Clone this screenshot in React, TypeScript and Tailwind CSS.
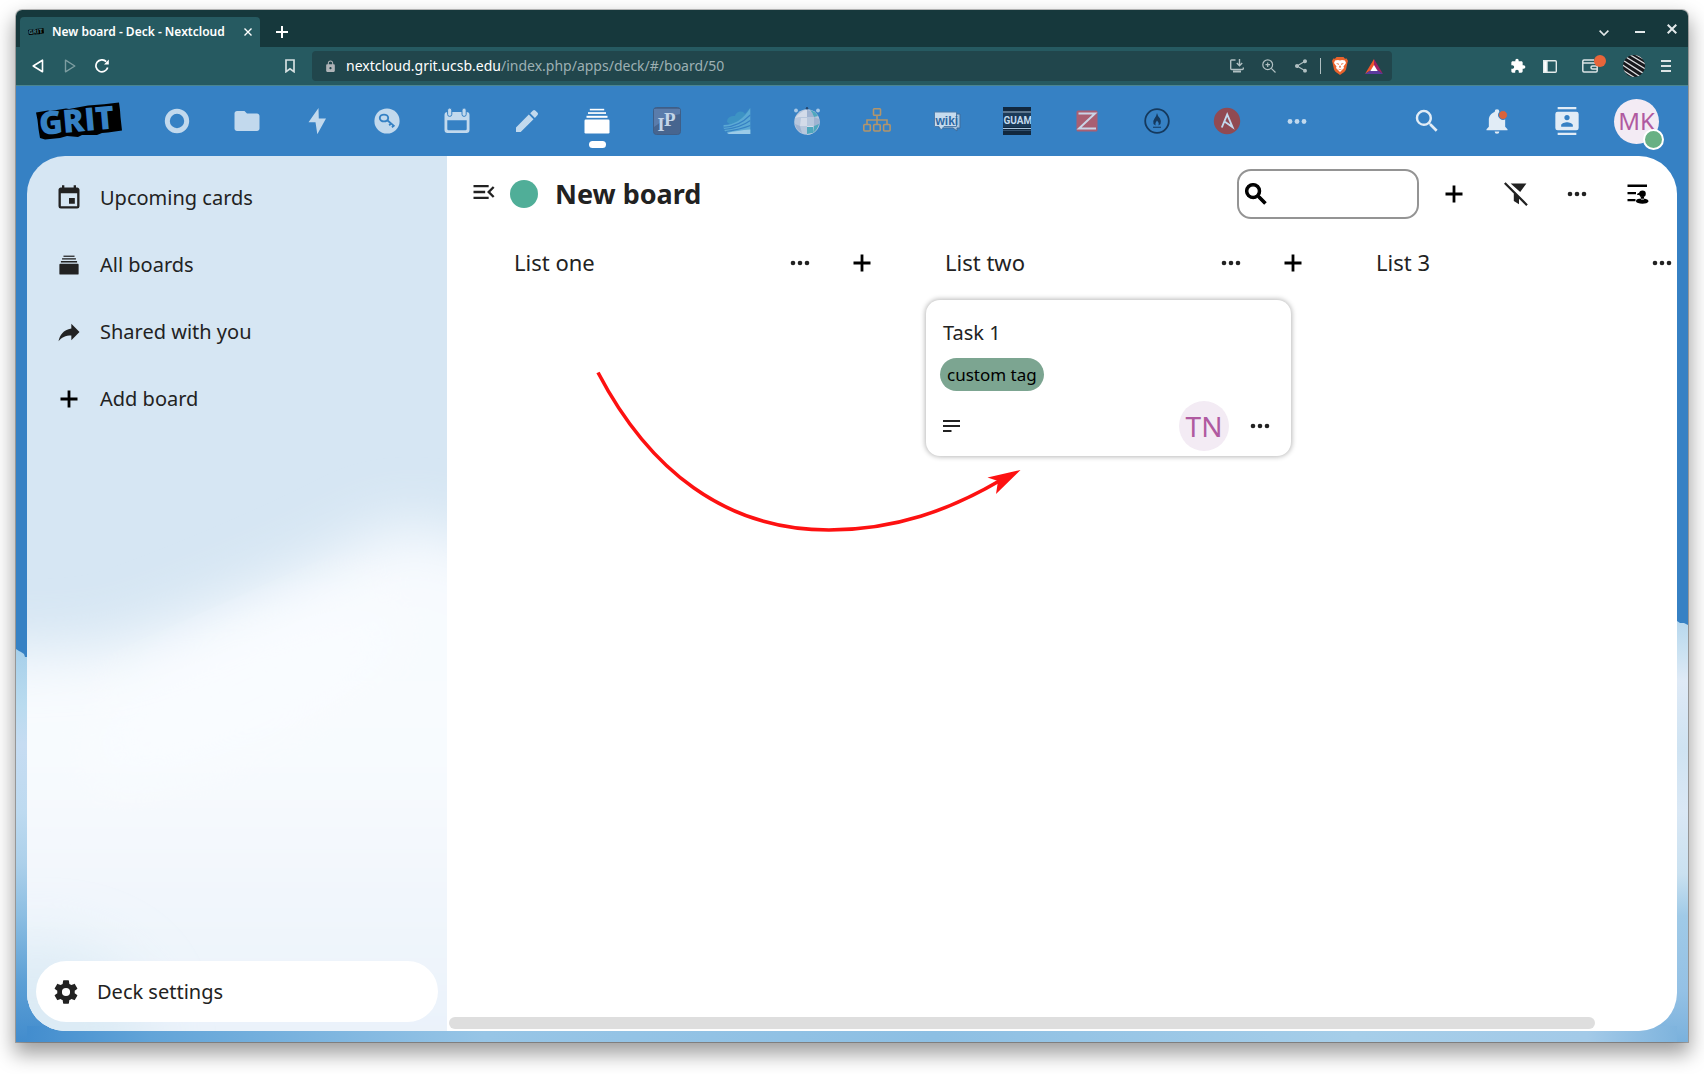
import React, { useState } from 'react';
import clsx from 'clsx';
import { MdExtension, MdFolder, MdLock, MdShare } from 'react-icons/md';

// Material style glyphs on a 24px grid
const paths = {
  magnify:
    'M9.5,3A6.5,6.5 0 0,1 16,9.5C16,11.11 15.41,12.59 14.44,13.73L14.71,14H15.5L20.5,19L19,20.5L14,15.5V14.71L13.73,14.44C12.59,15.41 11.11,16 9.5,16A6.5,6.5 0 0,1 3,9.5A6.5,6.5 0 0,1 9.5,3M9.5,5C7,5 5,7 5,9.5C5,12 7,14 9.5,14C12,14 14,12 14,9.5C14,7 12,5 9.5,5Z',
  menuOpen:
    'M21,15.61L19.59,17L14.58,12L19.59,7L21,8.39L17.44,12L21,15.61M3,6H16V8H3V6M3,13V11H13V13H3M3,18V16H16V18H3Z',
  calendar:
    'M19,19H5V8H19M16,1V3H8V1H6V3H5C3.89,3 3,3.89 3,5V19A2,2 0 0,0 5,21H19A2,2 0 0,0 21,19V5C21,3.89 20.1,3 19,3H18V1M17,12H12V17H17V12Z',
  share: 'M21,12L14,5V9C7,10 4,15 3,20C5.5,16.5 9,14.9 14,14.9V19L21,12Z',
  cog: 'M12,15.5A3.5,3.5 0 0,1 8.5,12A3.5,3.5 0 0,1 12,8.5A3.5,3.5 0 0,1 15.5,12A3.5,3.5 0 0,1 12,15.5M19.43,12.97C19.47,12.65 19.5,12.33 19.5,12C19.5,11.67 19.47,11.34 19.43,11L21.54,9.37C21.73,9.22 21.78,8.95 21.66,8.73L19.66,5.27C19.54,5.05 19.27,4.96 19.05,5.05L16.56,6.05C16.04,5.66 15.5,5.32 14.87,5.07L14.5,2.42C14.46,2.18 14.25,2 14,2H10C9.75,2 9.54,2.18 9.5,2.42L9.13,5.07C8.5,5.32 7.96,5.66 7.44,6.05L4.95,5.05C4.73,4.96 4.46,5.05 4.34,5.27L2.34,8.73C2.21,8.95 2.27,9.22 2.46,9.37L4.57,11C4.53,11.34 4.5,11.67 4.5,12C4.5,12.33 4.53,12.65 4.57,12.97L2.46,14.63C2.27,14.78 2.21,15.05 2.34,15.27L4.34,18.73C4.46,18.95 4.73,19.03 4.95,18.95L7.44,17.94C7.96,18.34 8.5,18.68 9.13,18.93L9.5,21.58C9.54,21.82 9.75,22 10,22H14C14.25,22 14.46,21.82 14.5,21.58L14.87,18.93C15.5,18.67 16.04,18.34 16.56,17.94L19.05,18.95C19.27,19.03 19.54,18.95 19.66,18.73L21.66,15.27C21.78,15.05 21.73,14.78 21.54,14.63L19.43,12.97Z',
  contacts:
    'M20,0H4V2H20V0M4,24H20V22H4V24M20,4H4A2,2 0 0,0 2,6V18A2,2 0 0,0 4,20H20A2,2 0 0,0 22,18V6A2,2 0 0,0 20,4M12,6.75A2.25,2.25 0 0,1 14.25,9A2.25,2.25 0 0,1 12,11.25A2.25,2.25 0 0,1 9.75,9A2.25,2.25 0 0,1 12,6.75M17,17H7V15.5C7,13.83 10.33,13 12,13C13.67,13 17,13.83 17,15.5V17Z',
  bell: 'M21,19V20H3V19L5,17V11C5,7.9 7.03,5.17 10,4.29C10,4.19 10,4.1 10,4A2,2 0 0,1 12,2A2,2 0 0,1 14,4C14,4.1 14,4.19 14,4.29C16.97,5.17 19,7.9 19,11V17L21,19M14,21A2,2 0 0,1 12,23A2,2 0 0,1 10,21',
  plus: 'M10.6 3.5h2.8V10.6h7.1v2.8H13.4v7.1h-2.8V13.4H3.5v-2.8H10.6z',
  filterOff:
    'M1.6 0.2L23.8 22.400L22.200 24L0 1.800zM6.600 1.400H22.400L16.200 10z M9.800 11.400L15 16.600V22.200L9.800 19z',
};

type IconName = keyof typeof paths;

function Icon({ name, className }: { name: IconName; className?: string }) {
  return (
    <svg viewBox="0 0 24 24" className={className} fill="currentColor" aria-hidden>
      <path d={paths[name]} />
    </svg>
  );
}

function Dots({ className }: { className?: string }) {
  return (
    <svg viewBox="0 0 20 6" className={clsx('w-5 h-[6px]', className)} fill="currentColor" aria-hidden>
      <circle cx="3" cy="3" r="2.3" />
      <circle cx="10" cy="3" r="2.3" />
      <circle cx="17" cy="3" r="2.3" />
    </svg>
  );
}

function DeckIcon({ className }: { className?: string }) {
  return (
    <svg viewBox="0 0 26 26" className={className} fill="currentColor" aria-hidden>
      <rect x="0.5" y="11.5" width="25" height="14" rx="1.2" />
      <rect x="2.5" y="7.8" width="21" height="2" />
      <rect x="4" y="4.2" width="18" height="1.7" />
      <rect x="5.8" y="0.8" width="14.4" height="1.6" />
    </svg>
  );
}

const LOGO_SHAPE =
  'M0 10.5L12 8.5L14 9L30 6.5L33 7L52 3.5L68 2.2L83 0.5L84 8L84.5 15L86 28.5L72 30.5L66 31L61 33L46 33L42 35L31 34L24 36L9 37.5L4 36L2.5 27L1.5 18z';

function GritLogo({ textClass, className }: { textClass: string; className?: string }) {
  return (
    <svg viewBox="0 0 86 38" overflow="visible" className={className} role="img" aria-label="GRIT">
      <path d={LOGO_SHAPE} fill="#000" />
      <text
        x="4"
        y="33"
        transform="rotate(-5 4 33)"
        fontFamily="Open Sans, sans-serif"
        fontWeight="800"
        fontSize="32"
        className={textClass}
      >
        GRIT
      </text>
    </svg>
  );
}

const navItems: { label: string; icon: React.ReactNode }[] = [
  {
    label: 'Dashboard',
    icon: <circle cx="14" cy="14" r="9.7" fill="none" stroke="#c2d9ed" strokeWidth="5" />,
  },
  { label: 'Files', icon: <MdFolder size={30} x={-1} y={-1} color="#c2d9ed" /> },
  { label: 'Activity', icon: <path d="M15.5 1L5.5 15.3H12.5L14.3 27.3L23 11.5H15.8z" fill="#c2d9ed" /> },
  {
    label: 'Passwords',
    icon: (
      <>
        <circle cx="14" cy="14" r="12.6" fill="#c2d9ed" />
        <g fill="none" stroke="#3681c4" strokeWidth="1.9">
          <ellipse cx="11" cy="11" rx="4.2" ry="3.4" />
          <path d="M14 13L21.5 19.4M16.2 18.4L18.3 16.2M19 20.4L21 18.2" />
        </g>
      </>
    ),
  },
  {
    label: 'Calendar',
    icon: (
      <>
        <path
          fillRule="evenodd"
          fill="#c2d9ed"
          d="M4.5 5h19a3 3 0 0 1 3 3v15a3 3 0 0 1-3 3h-19a3 3 0 0 1-3-3V8a3 3 0 0 1 3-3zM4.3 13.2v8.8a1.3 1.3 0 0 0 1.3 1.3h16.8a1.3 1.3 0 0 0 1.3-1.3v-8.8z"
        />
        <g fill="#c2d9ed" stroke="#3681c4" strokeWidth="1">
          <rect x="4.6" y="1" width="4.2" height="8.4" rx="2.1" />
          <rect x="19" y="1" width="4.2" height="8.4" rx="2.1" />
        </g>
      </>
    ),
  },
  {
    label: 'Notes',
    icon: <path fill="#c2d9ed" d="M3 25v-4.6L15.8 7.6L20.5 12.3L7.7 25zM17.2 6.2L20 3.4a1.6 1.6 0 0 1 2.2 0l2.4 2.4a1.6 1.6 0 0 1 0 2.2L21.900 10.900z" />,
  },
  {
    label: 'Deck',
    icon: <DeckIcon />,
  },
  {
    label: 'IP tools',
    icon: (
      <>
        <rect x="0.5" y="0.5" width="27" height="27" rx="3" fill="#47658f" stroke="#3f5e87" />
        <path d="M1 2h26v5q-12 2-26 13z" fill="#5a7cab" />
        <g fill="#c3d5e8" fontFamily="Liberation Serif, serif" fontWeight="700">
          <text x="4.5" y="23.500" fontSize="18">I</text>
          <text x="11" y="19" fontSize="19">P</text>
        </g>
      </>
    ),
  },
  {
    label: 'Ocean',
    icon: (
      <>
        <path d="M4 15C4 9 10 9 12 9C13 4 20 3 22 7L27 1V14L8 18z" fill="#3d93c4" />
        <path d="M0.5 18Q17 18 27.300 1V27H6L1 23z" fill="#5ba9d4" />
        <g fill="none" stroke="#3681c4" strokeWidth="1.100">
          <path d="M1 20.300Q16 19.500 27.300 8" />
          <path d="M1 22.500Q17 21 27.300 13.500" />
          <path d="M3 24.500Q17 22.500 27.300 18.500" />
        </g>
        <path d="M4 26Q14 23.500 27.300 22.500V27H6z" fill="#9ccbe8" />
      </>
    ),
  },
  {
    label: 'Globe',
    icon: (
      <>
        <circle cx="14" cy="15" r="12.800" fill="#b7c7dd" />
        <path d="M2 11Q8 4 14 2.500V10H6zM8 11H14V19H7zM14 19H20V26Q17 28 14 27.500z" fill="#d3dbe9" />
        <path d="M14 3Q20 4 21 10H14zM2 17L7 19L9 26Q3 23 2 17zM21 10L26 12L26 18L21 19z" fill="#9fb3d1" />
        <path d="M17 3Q22 4 25 9L21 10Q20 6 17 3zM21 19L26 17Q25 22 20 26zM14 20H20V26L14 27z" fill="#4fa7bd" />
        <circle cx="3" cy="3.500" r="1.900" fill="#a8c8e6" />
        <circle cx="25" cy="3.500" r="1.900" fill="#a8c8e6" />
        <circle cx="14" cy="1.300" r="1.200" fill="#26456b" />
      </>
    ),
  },
  {
    label: 'Sitemap',
    icon: (
      <g fill="none" stroke="#b3956b" strokeWidth="1.600">
        <rect x="10.500" y="1.800" width="7" height="6.500" rx="0.800" />
        <path d="M14 8.500V17M4 17V13H24V17" />
        <rect x="0.800" y="17.500" width="6.500" height="6.500" rx="1" />
        <rect x="10.700" y="17.500" width="6.500" height="6.500" rx="1" />
        <rect x="20.600" y="17.500" width="6.500" height="6.500" rx="1" />
      </g>
    ),
  },
  {
    label: 'Wiki',
    icon: (
      <>
        <path d="M6 7H27V21H24V24L20 21H6z" fill="#a9c4de" stroke="#3e6d9b" />
        <path d="M1.500 5H23.500V19.500H11L8 23L6 19.500H1.500z" fill="#c6dbee" stroke="#4d7cab" />
        <text x="2.500" y="17.500" fontSize="12" fontWeight="700" fill="#2b66a3" fontFamily="Liberation Sans, sans-serif">
          wiki
        </text>
      </>
    ),
  },
  {
    label: 'Guam',
    icon: (
      <>
        <rect width="28" height="28" fill="#11283f" />
        <path d="M0 5H28M0 21.500H28" stroke="#a9c4de" strokeWidth="1" />
        <path d="M0 23.500H28" stroke="#31506e" strokeWidth="1" />
        <rect y="6" width="28" height="14" fill="#1b3a58" />
        <text x="0.500" y="17" fontSize="10" fontWeight="700" fill="#c2d9ed" fontFamily="Roboto, sans-serif">
          GUAM
        </text>
      </>
    ),
  },
  {
    label: 'Zotero',
    icon: (
      <>
        <rect x="3.500" y="3.500" width="21" height="21" rx="1.500" fill="#a95f72" />
        <path d="M5.500 6.500H22L6 21.500H23" fill="none" stroke="#c9d4e6" strokeWidth="2" />
      </>
    ),
  },
  {
    label: 'Hotspot',
    icon: (
      <>
        <circle cx="14" cy="14" r="11.800" fill="none" stroke="#15395d" strokeWidth="1.800" />
        <path
          d="M14 6Q14.500 9 17 11.500Q18.500 14 17.500 17L15.500 18.500Q16 15 14 13.500Q12 15.500 12.500 18.500L10.500 17Q9.500 14 11.500 11.500Q13.500 9 14 6zM10 19.800H18V20.800H10z"
          fill="#15395d"
        />
      </>
    ),
  },
  {
    label: 'Ansible',
    icon: (
      <>
        <circle cx="14" cy="14" r="13.200" fill="#914a52" />
        <path d="M8.800 20.500L14.200 7.500L19.500 20L11.500 14.500" fill="none" stroke="#c2d9ed" strokeWidth="1.900" />
      </>
    ),
  },
  {
    label: 'More apps',
    icon: (
      <g fill="#c2d9ed">
        <circle cx="7" cy="14.500" r="2.400" />
        <circle cx="14" cy="14.500" r="2.400" />
        <circle cx="21" cy="14.500" r="2.400" />
      </g>
    ),
  },
];

const lists = [
  { id: 1, title: 'List one', cards: [] },
  { id: 2, title: 'List two', cards: [{ id: 1, title: 'Task 1', label: 'custom tag', user: 'TN' }] },
  { id: 3, title: 'List 3', cards: [] },
];

function BrowserTabs() {
  return (
    <div className="flex h-[37px] shrink-0 items-end bg-[#16383c] pl-1 text-white">
      <div className="flex h-[30px] w-60 items-center rounded-t bg-[#265a61] pl-2 pr-[5px]">
        <GritLogo className="w-4 shrink-0" textClass="fill-[#3b6f77]" />
        <span className="ml-2 flex-1 truncate text-xs font-semibold">New board - Deck - Nextcloud</span>
        <button aria-label="Close tab" className="flex size-[14px] items-center justify-center">
          <svg viewBox="0 0 8 8" className="size-2" stroke="currentColor" strokeWidth="1.4">
            <path d="M0.500 0.500L7.500 7.500M7.500 0.500L0.500 7.500" />
          </svg>
        </button>
      </div>
      <button aria-label="New tab" className="flex h-[30px] w-11 items-center justify-center">
        <svg viewBox="0 0 12 12" className="size-3" stroke="currentColor" strokeWidth="2">
          <path d="M6 0V12M0 6H12" />
        </svg>
      </button>
      <div className="ml-auto flex h-full items-center pr-[5px] text-[#e3e9ea]">
        <button aria-label="Search tabs" className="flex w-9 justify-center pt-2">
          <svg viewBox="0 0 10 6" className="h-[6px] w-[10px]" fill="none" stroke="currentColor" strokeWidth="1.6">
            <path d="M0.600 0.600L5 5L9.400 0.600" />
          </svg>
        </button>
        <button aria-label="Minimize" className="flex w-9 justify-center pt-[6px]">
          <span className="h-[2px] w-[10px] bg-current" />
        </button>
        <button aria-label="Close window" className="flex w-[25px] justify-end pr-[6px]">
          <svg viewBox="0 0 10 10" className="size-[10px]" stroke="currentColor" strokeWidth="2">
            <path d="M0.700 0.700L9.300 9.300M9.300 0.700L0.700 9.300" />
          </svg>
        </button>
      </div>
    </div>
  );
}

function BraveIcon() {
  return (
    <svg viewBox="0 0 16 18" className="h-[18px] w-4" aria-hidden>
      <path d="M4.500 0H11.500L13 1.700L14.700 1.500L16 4L15.400 6L14 12.500Q13.500 14.500 8 18Q2.500 14.500 2 12.500L0.600 6L0 4L1.300 1.500L3 1.700z" fill="#e8622c" />
      <path d="M3 3.500L6 3L8 3.600L10 3L13 3.500L14 6L11.500 9.500L12 11L8 15L4 11L4.500 9.500L2 6z" fill="#fff" />
      <path d="M4 6L7 6.800L6.500 8zM12 6L9 6.800L9.500 8zM8 8L9 10L8 11L7 10zM5.500 11.500L8 12.500L10.500 11.500L8 13.300z" fill="#e8622c" />
    </svg>
  );
}

function BrowserToolbar() {
  return (
    <div className="flex h-[39px] shrink-0 items-center border-b border-[#4a8590] bg-[#265a61] text-white">
      <div className="flex w-[296px] items-center pl-[6px] pr-[6px]">
        <button aria-label="Back" className="flex size-8 items-center justify-center">
          <svg viewBox="0 0 12 14" className="h-[14px] w-3" fill="none" stroke="currentColor" strokeWidth="1.600" strokeLinejoin="round">
            <path d="M10.500 1.200V12.800L1.200 7z" />
          </svg>
        </button>
        <button aria-label="Forward" className="flex size-8 items-center justify-center text-[#7d9da1]">
          <svg viewBox="0 0 12 14" className="h-[14px] w-3" fill="none" stroke="currentColor" strokeWidth="1.400" strokeLinejoin="round">
            <path d="M1.500 1.200V12.800L10.800 7z" />
          </svg>
        </button>
        <button aria-label="Reload" className="flex size-8 items-center justify-center">
          <svg viewBox="0 0 14 14" className="size-[14px]" fill="none" stroke="currentColor" strokeWidth="1.700">
            <path d="M12.700 8.500A6 6 0 1 1 11.200 2.600" />
            <path d="M13.800 0.500V5.500H9z" fill="currentColor" stroke="none" />
          </svg>
        </button>
        <button aria-label="Bookmark" className="ml-auto flex size-8 items-center justify-center text-[#d5e0e1]">
          <svg viewBox="0 0 10 14" className="h-[14px] w-[10px]" fill="none" stroke="currentColor" strokeWidth="1.700">
            <path d="M1 1H9V12.700L5 9.800L1 12.700z" />
          </svg>
        </button>
      </div>
      <div className="flex h-[30px] min-w-0 flex-1 items-center rounded bg-[#21464c] pl-3 pr-[9px]">
        <MdLock className="size-[13px] shrink-0 text-[#b0b4b8]" />
        <span className="ml-[9px] flex-1 truncate text-sm text-[#9db0b3]">
          <span className="text-white">nextcloud.grit.ucsb.edu</span>/index.php/apps/deck/#/board/50
        </span>
        <div className="flex items-center text-[#b0bfc1]">
          <button aria-label="Install" className="flex w-8 justify-center">
            <svg viewBox="0 0 14 14" className="size-[14px]" fill="none" stroke="currentColor" strokeWidth="1.400">
              <path d="M5.500 1H1.500Q0.700 1 0.700 1.800V9.500Q0.700 10.500 1.700 10.500H12.300Q13.300 10.500 13.300 9.500V8.500M9.500 0V6.500M6.800 4L9.500 6.700L12.200 4" />
              <path d="M3 12.500H11" strokeWidth="2" />
            </svg>
          </button>
          <button aria-label="Zoom" className="flex w-8 justify-center">
            <svg viewBox="0 0 14 14" className="size-[14px]" fill="none" stroke="currentColor" strokeWidth="1.200">
              <circle cx="5.700" cy="5.700" r="4.900" />
              <path d="M9.300 9.300L13.500 13.500M5.700 3.500V8M3.500 5.700H8" />
            </svg>
          </button>
          <button aria-label="Share" className="flex w-8 justify-center">
            <MdShare className="size-4" />
          </button>
          <span className="ml-[3px] h-4 w-px bg-[#b0bfc1]" />
          <button aria-label="Brave Shields" className="ml-[11px] flex w-4 justify-center">
            <BraveIcon />
          </button>
          <button aria-label="Brave Rewards" className="ml-[17px] flex justify-center">
            <svg viewBox="0 0 18 15" className="h-[15px] w-[18px]" aria-hidden>
              <path d="M9 0L0 15L9 9z" fill="#f0562b" />
              <path d="M9 0L18 15L9 9z" fill="#9e2063" />
              <path d="M0 15H18L9 9z" fill="#5b3a9e" />
              <path d="M9 6L5.300 12H12.700z" fill="#fff" />
            </svg>
          </button>
        </div>
      </div>
      <div className="flex w-[296px] items-center justify-end pr-[17px]">
        <button aria-label="Extensions" className="flex w-8 justify-center">
          <MdExtension className="size-4" />
        </button>
        <button aria-label="Sidebar" className="flex w-8 justify-center">
          <svg viewBox="0 0 14 13" className="h-[13px] w-[14px]" fill="none" stroke="#e3eaea" strokeWidth="1.400">
            <rect x="0.700" y="0.700" width="12.600" height="11.600" rx="1" />
            <path d="M0.700 0.700H4V12.300H0.700z" fill="#fff" />
          </svg>
        </button>
        <button aria-label="Wallet" className="relative ml-2 flex w-8 justify-center">
          <svg viewBox="0 0 16 14" className="h-[14px] w-4" fill="none" stroke="#dbe4e5" strokeWidth="1.500">
            <path d="M12 1H2Q0.800 1 0.800 2.200V11.800Q0.800 13 2 13H14Q15.200 13 15.200 11.800V5Q15.200 4 14 4H0.800M15.200 7H10.500Q9 7 9 8.500Q9 10 10.500 10H15.200" />
          </svg>
          <span className="absolute -top-1 right-0 size-3 rounded-full bg-[#e8653a]" />
        </button>
        <button aria-label="Profile" className="ml-[17px] size-[22px] overflow-hidden rounded-full bg-[#17181c]">
          <svg viewBox="0 0 22 22" className="size-[22px]" stroke="#d8dadd" strokeWidth="1.300">
            <path d="M-2 -1L24 15M4 -2L26 11M-2 4L23 20M-2 9L19 23M-2 14L12 23M10 -2L26 7" />
          </svg>
        </button>
        <button aria-label="Menu" className="ml-4 flex w-[10px] flex-col gap-[3px]">
          <span className="h-[2px] bg-[#dbe4e5]" />
          <span className="h-[2px] bg-[#dbe4e5]" />
          <span className="h-[2px] bg-[#dbe4e5]" />
        </button>
      </div>
    </div>
  );
}

// Sky with the cloud tops that show around the content panel
function Wallpaper() {
  return (
    <svg
      viewBox="0 0 1672 956"
      preserveAspectRatio="none"
      className="absolute inset-0 size-full"
      aria-hidden
    >
      <defs>
        <linearGradient id="cloudLeft" x1="0" y1="560" x2="0" y2="956" gradientUnits="userSpaceOnUse">
          <stop offset="0" stopColor="#a6cfea" />
          <stop offset="0.150" stopColor="#b9dbef" />
          <stop offset="0.250" stopColor="#c6dcf2" />
          <stop offset="0.420" stopColor="#bddaf0" />
          <stop offset="0.550" stopColor="#acd0ea" />
          <stop offset="0.680" stopColor="#8cbee2" />
          <stop offset="0.850" stopColor="#5c9fd5" />
          <stop offset="1" stopColor="#428ccd" />
        </linearGradient>
        <linearGradient id="cloudRight" x1="0" y1="536" x2="0" y2="956" gradientUnits="userSpaceOnUse">
          <stop offset="0" stopColor="#b8d8ee" />
          <stop offset="0.080" stopColor="#cde3f2" />
          <stop offset="0.140" stopColor="#dfeaf6" />
          <stop offset="0.300" stopColor="#cfe3f2" />
          <stop offset="0.450" stopColor="#dae8f5" />
          <stop offset="0.600" stopColor="#cae1f0" />
          <stop offset="0.700" stopColor="#a0cae7" />
          <stop offset="0.880" stopColor="#94c1e5" />
          <stop offset="1" stopColor="#7ab1dc" />
        </linearGradient>
        <linearGradient id="cloudBottom" x1="0" y1="0" x2="1672" y2="0" gradientUnits="userSpaceOnUse">
          <stop offset="0" stopColor="#408bcd" />
          <stop offset="0.080" stopColor="#62a4d8" />
          <stop offset="0.280" stopColor="#97c5e6" />
          <stop offset="0.550" stopColor="#8dbfe3" />
          <stop offset="0.800" stopColor="#a6cee9" />
          <stop offset="0.940" stopColor="#a3cae8" />
          <stop offset="1" stopColor="#7ab1dc" />
        </linearGradient>
      </defs>
      <rect width="1672" height="956" fill="#3681c4" />
      <path d="M0 563L3 565L5 566L8 568L9 571L11 571V560H40V956H0z" fill="url(#cloudLeft)" />
      <path d="M1640 540L1661 535L1664 537L1668 537L1672 539V956H1640z" fill="url(#cloudRight)" />
      <rect x="11" y="940" width="1650" height="16" fill="url(#cloudBottom)" />
    </svg>
  );
}

// The same sky seen blurred through the translucent sidebar
function SidebarBackdrop() {
  return (
    <svg viewBox="0 0 420 875" preserveAspectRatio="none" className="absolute inset-0 size-full" aria-hidden>
      <defs>
        <filter id="soft" x="-40%" y="-40%" width="180%" height="180%">
          <feGaussianBlur stdDeviation="30" />
        </filter>
        <linearGradient id="haze" x1="0" y1="0" x2="0" y2="1">
          <stop offset="0" stopColor="#f7fafe" />
          <stop offset="0.350" stopColor="#f8fbfe" />
          <stop offset="0.600" stopColor="#f1f6fc" />
          <stop offset="0.800" stopColor="#eaf2fa" />
          <stop offset="1" stopColor="#e9f2fa" />
        </linearGradient>
      </defs>
      <rect width="420" height="875" fill="#d6e6f3" />
      <path
        d="M-120 500L80 492Q160 465 240 430Q310 400 365 370L410 372L540 430V1000H-120z"
        fill="url(#haze)"
        filter="url(#soft)"
      />
      <ellipse cx="220" cy="535" rx="180" ry="50" fill="#f9fcff" filter="url(#soft)" transform="rotate(-24 220 535)" />
      <ellipse cx="10" cy="880" rx="110" ry="90" fill="#dcebf5" filter="url(#soft)" />
    </svg>
  );
}

function AppHeader() {
  return (
    <header className="relative flex h-[70px] shrink-0 items-center">
      <a href="#home" className="ml-5 block w-[86px] shrink-0">
        <GritLogo className="h-[38px] w-[86px]" textClass="fill-[#3681c4]" />
      </a>
      <nav aria-label="Applications" className="ml-5 flex h-full">
        {navItems.map(({ label, icon }) => (
          <a
            key={label}
            href={`#${label}`}
            aria-label={label}
            className="relative flex w-[70px] items-center justify-center text-white"
          >
            {label === 'Deck' ? (
              <>
                <DeckIcon className="size-[26px]" />
                <span className="absolute bottom-2 h-[7px] w-[17px] rounded-full bg-white" />
              </>
            ) : (
              <svg viewBox="0 0 28 28" className="size-7" aria-hidden>
                {icon}
              </svg>
            )}
          </a>
        ))}
      </nav>
      <div className="ml-auto flex h-full items-center pr-[29px] text-[#e1ecf6]">
        <button aria-label="Search" className="flex w-[70px] justify-center">
          <Icon name="magnify" className="size-[30px]" />
        </button>
        <button aria-label="Notifications" className="relative flex w-[70px] justify-center">
          <Icon name="bell" className="size-7" />
          <span className="absolute right-6 top-[3px] size-[10px] rounded-full border border-[#3681c4] bg-[#d9633b]" />
        </button>
        <button aria-label="Contacts" className="flex w-[70px] justify-center">
          <Icon name="contacts" className="size-7" />
        </button>
        <button
          aria-label="MK, online"
          className="relative ml-3 flex size-[45px] items-center justify-center rounded-full bg-[#f3ebf4] text-2xl text-[#b05aa0]"
        >
          MK
          <span className="absolute -bottom-[6px] -right-[5px] size-[21px] rounded-full border-2 border-white bg-[#68b084]" />
        </button>
      </div>
    </header>
  );
}

function Sidebar() {
  const entries = [
    { label: 'Upcoming cards', icon: <Icon name="calendar" className="size-7" /> },
    { label: 'All boards', icon: <DeckIcon className="size-5" /> },
    { label: 'Shared with you', icon: <Icon name="share" className="size-7" /> },
    { label: 'Add board', icon: <Icon name="plus" className="size-6 text-black" /> },
  ];

  return (
    <aside className="relative flex w-[420px] shrink-0 flex-col">
      <SidebarBackdrop />
      <ul className="relative pt-2">
        {entries.map((entry) => (
          <li key={entry.label}>
            <a href="#boards" className="flex h-[67px] items-center pl-7 text-xl">
              <span className="flex w-7 justify-center">{entry.icon}</span>
              <span className="ml-[17px]">{entry.label}</span>
            </a>
          </li>
        ))}
      </ul>
      <button className="relative mx-[9px] mb-[9px] mt-auto flex h-[61px] items-center rounded-full bg-white pl-4 text-xl">
        <Icon name="cog" className="size-7" />
        <span className="ml-[17px]">Deck settings</span>
      </button>
    </aside>
  );
}

function Card({ title, label, user }: { title: string; label: string; user: string }) {
  return (
    <article className="ml-8 w-[365px] rounded-[14px] bg-white shadow-[0_0_5px_1px_rgba(0,0,0,0.28)]">
      <h4 className="pl-[17px] pt-[18px] text-xl leading-[30px]">{title}</h4>
      <span className="ml-[14px] mt-[10px] inline-flex h-[33px] items-center rounded-full bg-[#7ca591] px-[7px] text-[17px] text-black">
        {label}
      </span>
      <div className="flex items-center pb-[5px] pl-[17px] pr-[6px] pt-[10px]">
        <svg viewBox="0 0 17 12" className="h-3 w-[17px]" stroke="currentColor" strokeWidth="2" aria-hidden>
          <path d="M0 1H17M0 6H17M0 11H8.500" />
        </svg>
        <span className="ml-auto mr-[6px] flex size-[50px] items-center justify-center rounded-full bg-[#f3ebf4] text-[28px] text-[#b05aa0]">
          {user}
        </span>
        <button aria-label="Card actions" className="flex size-[50px] items-center justify-center">
          <Dots />
        </button>
      </div>
    </article>
  );
}

// Hand-drawn hint: the card moves from the first list to the second
function MoveArrow() {
  return (
    <svg viewBox="0 0 440 180" className="pointer-events-none absolute left-[143px] top-[209px] h-[180px] w-[440px]" aria-hidden>
      <path d="M8 7.500C59 105 135 165 239 165C305 165 360 145 411 115" fill="none" stroke="#fd1111" strokeWidth="3.600" />
      <path d="M430.500 105L397.500 112.500L408 116L406 129z" fill="#fd1111" />
    </svg>
  );
}

function Board() {
  const [query, setQuery] = useState('');

  return (
    <main className="relative flex min-w-0 flex-1 flex-col overflow-hidden bg-white">
      <div className="flex h-[76px] shrink-0 items-center pl-[23px] pr-2">
        <button aria-label="Toggle navigation" className="flex pb-1">
          <Icon name="menuOpen" className="size-7" />
        </button>
        <span className="ml-3 size-7 rounded-full bg-[#50ae98]" />
        <h2 className="ml-[17px] text-[27px] font-bold">New board</h2>
        <div className="relative ml-auto">
          <label htmlFor="deck-search" className="absolute inset-y-0 left-[5px] flex items-center text-black">
            <Icon name="magnify" className="size-7 stroke-current" />
          </label>
          <input
            id="deck-search"
            type="text"
            aria-label="Search cards"
            value={query}
            onChange={(e) => setQuery(e.target.value)}
            className="block h-[50px] w-[182px] rounded-[14px] border-2 border-[#949494] bg-transparent pl-10 pr-3 text-xl outline-none"
          />
        </div>
        <div className="ml-1 flex">
          <button aria-label="Add list" className="flex h-[50px] w-[62px] items-center justify-center text-black">
            <Icon name="plus" className="size-6" />
          </button>
          <button aria-label="Filter" className="flex h-[50px] w-[61px] items-center justify-center">
            <Icon name="filterOff" className="size-6" />
          </button>
          <button aria-label="View modes" className="flex h-[50px] w-[61px] items-center justify-center">
            <Dots />
          </button>
          <button aria-label="Board details" className="flex h-[50px] w-[62px] items-center justify-center text-black">
            <svg viewBox="0 0 22 20" className="h-5 w-[22px]" fill="currentColor" aria-hidden>
              <path d="M0.500 0.500H20V3H0.500zM0.500 8H9V10.300H0.500zM0.500 15H8.500V17.300H0.500z" />
              <circle cx="15.500" cy="9.700" r="3.300" />
              <path d="M10 11H13.500L14 15.500H17V12.500H13V8.500L10.500 9.500zM9 17.500Q9 14 14 14.800H18Q21.500 15.500 21.500 17.500Q20 19.700 15.500 19.700Q10 19.500 9 17.500z" />
            </svg>
          </button>
        </div>
      </div>

      <div className="flex min-h-0 flex-1 overflow-hidden pl-[15px]">
        {lists.map((list) => (
          <section key={list.id} className="w-[431px] shrink-0">
            <div className="flex h-[61px] items-center pl-[52px]">
              <h3 className="flex-1 text-[22px]">{list.title}</h3>
              <button aria-label="List actions" className="flex h-[50px] w-[62px] items-center justify-center">
                <Dots />
              </button>
              <button aria-label="Add card" className="flex h-[50px] w-[62px] items-center justify-center text-black">
                <Icon name="plus" className="size-6" />
              </button>
            </div>
            <div className="pl-px pt-[7px]">
              {list.cards.map((card) => (
                <Card key={card.id} {...card} />
              ))}
            </div>
          </section>
        ))}
      </div>

      <div className="mb-[2px] ml-[2px] mr-[82px] h-3 shrink-0 rounded-full bg-[#dedede]" />
      <MoveArrow />
    </main>
  );
}

export default function App() {
  return (
    <div className="flex min-h-screen flex-col bg-white px-4 pb-8 pt-[10px] font-['Noto_Sans',sans-serif] text-[#222]">
      <div className="flex flex-1 flex-col overflow-hidden rounded-t-md shadow-[0_0_0_1px_rgba(0,0,0,0.25),0_10px_20px_2px_rgba(0,0,0,0.38)]">
        <BrowserTabs />
        <BrowserToolbar />
        <div className="relative flex flex-1 flex-col">
          <Wallpaper />
          <AppHeader />
          <div className="relative mx-[11px] mb-[11px] flex flex-1 overflow-hidden rounded-[38px]">
            <Sidebar />
            <Board />
          </div>
        </div>
      </div>
    </div>
  );
}
